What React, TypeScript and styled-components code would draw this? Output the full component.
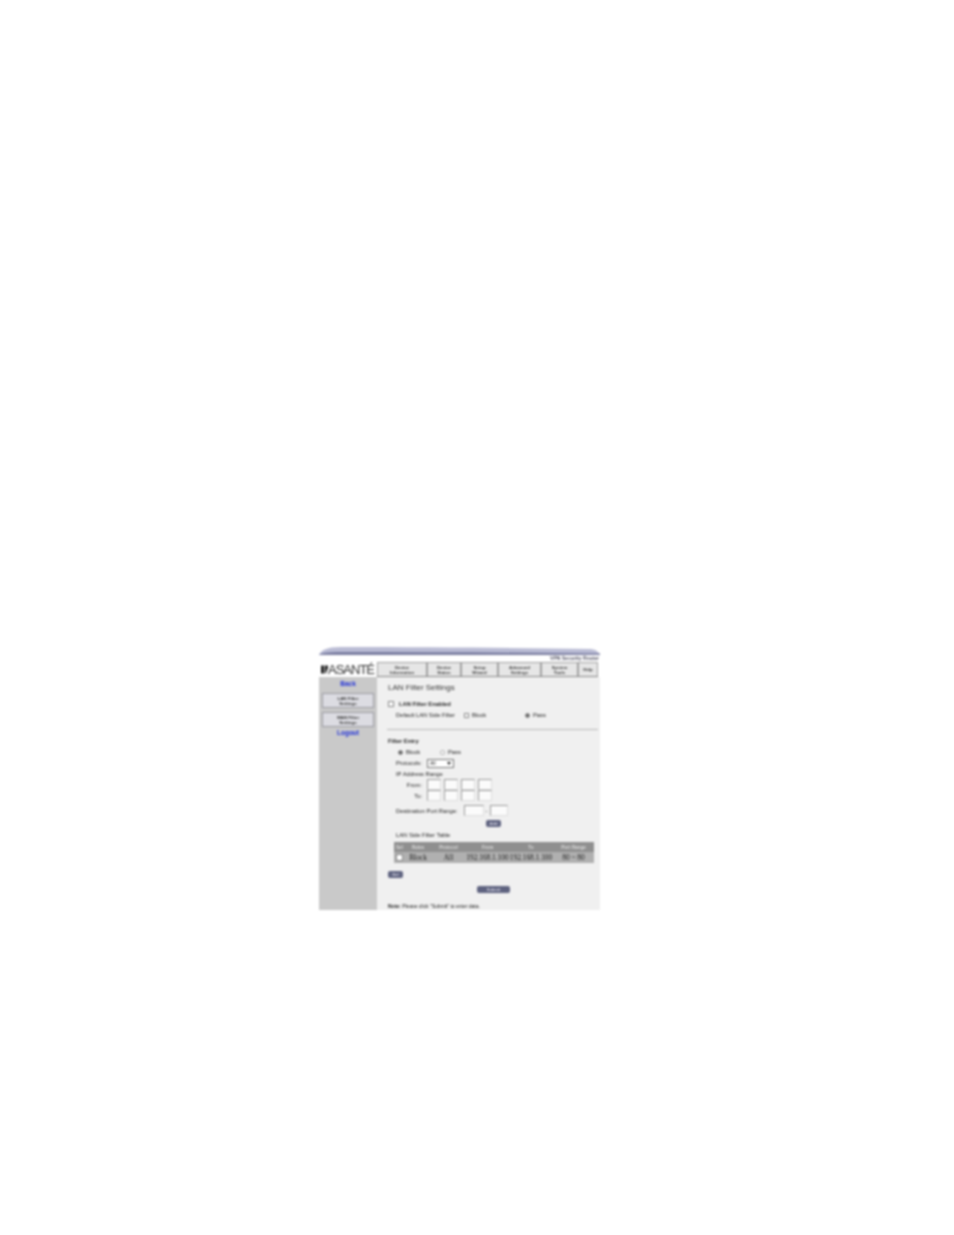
import styled, { createGlobalStyle } from "styled-components";

const Global = createGlobalStyle`
body {
  margin: 0;
  background: #ffffff;
  font-family: "Liberation Sans", Arial, sans-serif;
}
`;

const Page = styled.div`
  height: 1235px;
  padding: 646px 0 0 319px;
  box-sizing: border-box;
`;

const Frame = styled.div`
  width: 281px;
  height: 264px;
  overflow: hidden;
  display: flex;
  flex-direction: column;
  background: #f0f0f0;
  filter: blur(0.8px);
`;

const Swoosh = styled.svg`
  display: block;
  flex: none;
`;

const Header = styled.div`
  flex: none;
  height: 22px;
  display: flex;
  background: #ffffff;
`;

const Logo = styled.div`
  width: 58px;
  display: flex;
  align-items: center;
  padding: 7px 0 0 2px;
  box-sizing: border-box;
  font-size: 13px;
  letter-spacing: -1px;
  color: #333;
  overflow: hidden;
`;

const HeaderRight = styled.div`
  flex: 1;
  display: flex;
  flex-direction: column;
`;

const Product = styled.div`
  height: 6px;
  line-height: 6px;
  text-align: right;
  font-size: 5px;
  font-weight: bold;
  color: #556;
  padding-right: 1px;
`;

const Tabs = styled.div`
  height: 15px;
  display: flex;
  margin-right: 2px;
  margin-top: 1px;
  border-bottom: 1px solid #888;
  box-sizing: border-box;
`;

const Tab = styled.div<{ $w: number }>`
  width: ${(p) => p.$w}px;
  box-sizing: border-box;
  background: #e6e6e6;
  border: 1px solid #a0a0a0;
  border-bottom: none;
  display: flex;
  align-items: center;
  justify-content: center;
  text-align: center;
  font-size: 4.4px;
  line-height: 5px;
  font-weight: bold;
  color: #333;
`;

const Body = styled.div`
  flex: 1;
  display: flex;
  min-height: 0;
`;

const Side = styled.div`
  width: 58px;
  flex: none;
  background: #c9c9c9;
  display: flex;
  flex-direction: column;
  align-items: center;
  padding-top: 3px;
  box-sizing: border-box;
`;

const SideLink = styled.div<{ $top?: number }>`
  font-size: 6.5px;
  line-height: 8px;
  font-weight: bold;
  color: #2030d8;
  margin-top: ${(p) => p.$top ?? 0}px;
`;

const SideButton = styled.div<{ $top: number }>`
  width: 52px;
  height: 15px;
  margin-top: ${(p) => p.$top}px;
  box-sizing: border-box;
  background: #dcdce2;
  border: 1px solid #9a9aa2;
  display: flex;
  align-items: center;
  justify-content: center;
  text-align: center;
  font-size: 4.4px;
  line-height: 5px;
  font-weight: bold;
  color: #333;
`;

const Main = styled.div`
  flex: 1;
  padding: 6px 0 0 11px;
  font-size: 5.8px;
  color: #222;
  min-width: 0;
`;

const Title = styled.div`
  font-size: 8px;
  line-height: 10px;
  color: #333;
`;

const Row = styled.div<{ $top: number; $left?: number; $gap?: number }>`
  display: flex;
  align-items: center;
  height: 8px;
  margin-top: ${(p) => p.$top}px;
  margin-left: ${(p) => p.$left ?? 0}px;
  gap: ${(p) => p.$gap ?? 3}px;
  white-space: nowrap;
`;

const Strong = styled.span`
  font-weight: bold;
  color: #222;
`;

const Check = styled.span<{ $size?: number }>`
  flex: none;
  width: ${(p) => p.$size ?? 5}px;
  height: ${(p) => p.$size ?? 5}px;
  background: #fff;
  border: 1px solid #888;
  box-sizing: border-box;
`;

const Radio = styled.span<{ $on?: boolean }>`
  flex: none;
  width: 5px;
  height: 5px;
  border-radius: 50%;
  border: 1px solid ${(p) => (p.$on ? "#888" : "#aaa")};
  background: ${(p) => (p.$on ? "#666" : "#fff")};
  box-sizing: border-box;
`;

const Fixed = styled.span<{ $w: number }>`
  width: ${(p) => p.$w}px;
  flex: none;
`;

const Divider = styled.div`
  height: 1px;
  background: #b8b8b8;
  margin: 10px 2px 0 -1px;
`;

const Select = styled.div`
  width: 27px;
  height: 9px;
  box-sizing: border-box;
  background: #fff;
  border: 1px solid #777;
  display: flex;
  align-items: center;
  justify-content: space-between;
  padding: 0 2px;
  font-size: 5px;
`;

const Arrow = styled.span`
  width: 0;
  height: 0;
  border-left: 2px solid transparent;
  border-right: 2px solid transparent;
  border-top: 3px solid #222;
`;

const IpGrid = styled.div`
  display: grid;
  grid-template-columns: 28px repeat(4, 14px);
  grid-auto-rows: 11px;
  column-gap: 3px;
  margin: 1px 0 0 8px;
  align-items: center;
`;

const IpLabel = styled.span`
  text-align: right;
  margin-right: 2px;
`;

const Field = styled.span<{ $w?: number }>`
  display: block;
  width: ${(p) => p.$w ?? 14}px;
  height: 11px;
  box-sizing: border-box;
  background: #fbfbfb;
  border: 1px solid #999;
  border-right-color: #ddd;
  border-bottom-color: #ddd;
`;

const PortRow = styled.div`
  display: flex;
  align-items: center;
  height: 11px;
  margin: 4px 0 0 8px;
  white-space: nowrap;
`;

const Pill = styled.div<{ $w: number; $left: number; $top: number }>`
  width: ${(p) => p.$w}px;
  height: 7px;
  margin: ${(p) => p.$top}px 0 0 ${(p) => p.$left}px;
  border-radius: 2px;
  background: #5f6380;
  color: #d8d8e4;
  font-size: 4px;
  line-height: 7px;
  font-weight: bold;
  text-align: center;
`;

const TableCaption = styled.div`
  margin: 5px 0 0 8px;
  height: 7px;
  line-height: 7px;
`;

const FilterTable = styled.div`
  width: 200px;
  margin: 3px 0 0 6px;
  display: grid;
  grid-template-columns: 11px 26px 35px 43px 44px 41px;
  grid-template-rows: 10px 11px;
  background: #b0b0b0;
`;

const HeadCell = styled.div`
  background: #8f8f8f;
  color: #dcdcdc;
  font-size: 4.6px;
  font-weight: bold;
  display: flex;
  align-items: center;
  justify-content: center;
`;

const DataCell = styled.div`
  font-family: "Liberation Serif", serif;
  color: #222;
  font-size: 7.4px;
  white-space: nowrap;
  display: flex;
  align-items: center;
  justify-content: center;
`;

const Note = styled.div`
  margin-top: 10px;
  font-size: 5px;
  line-height: 7px;
  white-space: nowrap;
`;

const tabs = [
  { w: 50, top: "Device", bottom: "Information" },
  { w: 34, top: "Device", bottom: "Status" },
  { w: 37, top: "Setup", bottom: "Wizard" },
  { w: 43, top: "Advanced", bottom: "Settings" },
  { w: 37, top: "System", bottom: "Tools" },
  { w: 20, top: "Help", bottom: "" },
];

const columns = ["Sel", "Rules", "Protocol", "From", "To", "Port Range"];

const App = () => {
  return (
    <Page>
      <Global />
      <Frame>
        <Swoosh width="281" height="9" viewBox="0 0 281 9">
          <rect width="281" height="9" fill="#ffffff" />
          <path d="M0 9 C2 4 8 1 22 1 C110 1 200 2 270 3 C276 3 279 5 281 9 Z" fill="#b9bbd4" />
          <path d="M0 9 C2 7 8 6 22 6 C110 6 200 6.5 281 7.5 L281 9 Z" fill="#7a7da0" />
        </Swoosh>
        <Header>
          <Logo>
            <svg width="7" height="9" viewBox="0 0 9 10">
              <path d="M0 0H4V10H0ZM5 0H9V3L6 10H5Z" fill="#222" />
            </svg>
            ASANTÉ
          </Logo>
          <HeaderRight>
            <Product>VPN Security Router</Product>
            <Tabs>
              {tabs.map((tab) => (
                <Tab key={tab.top} $w={tab.w}>
                  <span>
                    {tab.top}
                    {tab.bottom && <br />}
                    {tab.bottom}
                  </span>
                </Tab>
              ))}
            </Tabs>
          </HeaderRight>
        </Header>
        <Body>
          <Side>
            <SideLink>Back</SideLink>
            <SideButton $top={5}>
              <span>
                LAN Filter
                <br />
                Settings
              </span>
            </SideButton>
            <SideButton $top={4}>
              <span>
                WAN Filter
                <br />
                Settings
              </span>
            </SideButton>
            <SideLink $top={2}>Logout</SideLink>
          </Side>
          <Main>
            <Title>LAN Filter Settings</Title>
            <Row $top={7} $gap={5}>
              <Check $size={6} />
              <Strong>LAN Filter Enabled</Strong>
            </Row>
            <Row $top={3} $left={8}>
              <Fixed $w={65}>Default LAN Side Filter</Fixed>
              <Check />
              <Fixed $w={50}>Block</Fixed>
              <Radio $on />
              <span>Pass</span>
            </Row>
            <Divider />
            <Row $top={7}>
              <Strong>Filter Entry</Strong>
            </Row>
            <Row $top={3} $left={10}>
              <Radio $on />
              <Fixed $w={31}>Block</Fixed>
              <Radio />
              <span>Pass</span>
            </Row>
            <Row $top={3} $left={8} $gap={2}>
              <Fixed $w={29}>Protocols:</Fixed>
              <Select>
                All
                <Arrow />
              </Select>
            </Row>
            <Row $top={3} $left={8}>
              IP Address Range
            </Row>
            <IpGrid>
              <IpLabel>From:</IpLabel>
              <Field />
              <Field />
              <Field />
              <Field />
              <IpLabel>To:</IpLabel>
              <Field />
              <Field />
              <Field />
              <Field />
            </IpGrid>
            <PortRow>
              <Fixed $w={68}>Destination Port Range:</Fixed>
              <Field $w={20} />
              <Fixed $w={6}>&nbsp;-</Fixed>
              <Field $w={18} />
            </PortRow>
            <Pill $w={15} $left={98} $top={4}>
              Add
            </Pill>
            <TableCaption>LAN Side Filter Table</TableCaption>
            <FilterTable>
              {columns.map((c) => (
                <HeadCell key={c}>{c}</HeadCell>
              ))}
              <DataCell>
                <Check $size={7} />
              </DataCell>
              <DataCell>Block</DataCell>
              <DataCell>All</DataCell>
              <DataCell>192.168.1.100</DataCell>
              <DataCell>192.168.1.100</DataCell>
              <DataCell>80 ~ 80</DataCell>
            </FilterTable>
            <Pill $w={15} $left={0} $top={8}>
              Del
            </Pill>
            <Pill $w={33} $left={89} $top={8}>
              Submit
            </Pill>
            <Note>
              <Strong>Note:</Strong> Please click "Submit" to enter data.
            </Note>
          </Main>
        </Body>
      </Frame>
    </Page>
  );
};

export default App;
